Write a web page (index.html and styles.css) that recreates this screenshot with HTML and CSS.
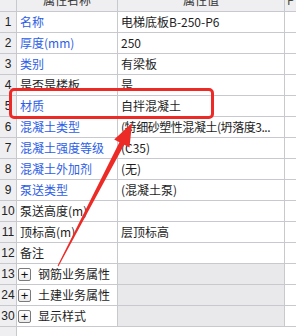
FILE: index.html
```html
<!DOCTYPE html>
<html>
<head>
<meta charset="utf-8">
<link rel="stylesheet" href="styles.css">
</head>
<body>
<div class="sheet">
  <div class="grid">
    <div class="cell num hdr"></div>
    <div class="cell hdr"><span class="htxt">属性名称</span></div>
    <div class="cell hdr"><span class="htxt">属性值</span></div>
    <div class="cell hdr last"><span class="htxt left">P</span></div>

    <div class="cell num">1</div><div class="cell name blue">名称</div><div class="cell val">电梯底板B-250-P6</div><div class="cell last"></div>
    <div class="cell num">2</div><div class="cell name blue">厚度(mm)</div><div class="cell val">250</div><div class="cell last"></div>
    <div class="cell num">3</div><div class="cell name blue">类别</div><div class="cell val">有梁板</div><div class="cell last"></div>
    <div class="cell num">4</div><div class="cell name">是否是楼板</div><div class="cell val">是</div><div class="cell last"></div>
    <div class="cell num">5</div><div class="cell name blue">材质</div><div class="cell val">自拌混凝土</div><div class="cell last"></div>
    <div class="cell num">6</div><div class="cell name blue">混凝土类型</div><div class="cell val tight">(特细砂塑性混凝土(坍落度3...</div><div class="cell last"></div>
    <div class="cell num">7</div><div class="cell name blue">混凝土强度等级</div><div class="cell val">(C35)</div><div class="cell last"></div>
    <div class="cell num">8</div><div class="cell name blue">混凝土外加剂</div><div class="cell val">(无)</div><div class="cell last"></div>
    <div class="cell num">9</div><div class="cell name blue">泵送类型</div><div class="cell val">(混凝土泵)</div><div class="cell last"></div>
    <div class="cell num">10</div><div class="cell name">泵送高度(m)</div><div class="cell val"></div><div class="cell last"></div>
    <div class="cell num">11</div><div class="cell name">顶标高(m)</div><div class="cell val">层顶标高</div><div class="cell last"></div>
    <div class="cell num">12</div><div class="cell name">备注</div><div class="cell val"></div><div class="cell last"></div>

    <div class="cell num">13</div><div class="cell name grp"><span class="plus">+</span>钢筋业务属性</div><div class="cell val gval"></div><div class="cell last"></div>
    <div class="cell num">24</div><div class="cell name grp"><span class="plus">+</span>土建业务属性</div><div class="cell val gval"></div><div class="cell last"></div>
    <div class="cell num">30</div><div class="cell name grp"><span class="plus">+</span>显示样式</div><div class="cell val gval"></div><div class="cell last"></div>

    <div class="cell num filler"></div>
  </div>

  <div class="highlight"></div>
  <svg class="arrow" width="296" height="336" viewBox="0 0 296 336">
    <polygon fill="#ec2a26" points="132,123 129.5,147.5 124.2,144.8 58.4,266.4 57.6,265.8 119.4,142.2 114.2,139.6"/>
  </svg>
</div>
</body>
</html>
```

FILE: styles.css
```css
html, body {
  margin: 0;
  padding: 0;
  background: #ffffff;
}

.sheet {
  position: relative;
  width: 296px;
  height: 336px;
  overflow: hidden;
  font-family: "Microsoft YaHei", "Noto Sans CJK SC", "Noto Sans", sans-serif;
  font-size: 12px;
  color: #1e1e1e;
}

.grid {
  display: grid;
  grid-template-columns: 17px 101px 167px 1fr;
  grid-template-rows: 12px;
  grid-auto-rows: 21px;
}

.cell {
  box-sizing: border-box;
  border-right: 1px solid #c8c8cf;
  border-bottom: 1px solid #c8c8cf;
  display: flex;
  align-items: center;
  white-space: nowrap;
  overflow: hidden;
  line-height: 20px;
}

.cell.last {
  border-right: none;
}

.hdr {
  background: #efeff1;
  align-items: flex-start;
  justify-content: center;
  color: #333;
}

.htxt {
  display: block;
  margin-top: -11px;
  line-height: 21px;
}

.htxt.left {
  margin-left: 0;
  color: #4a4a3a;
}

.hdr.last {
  justify-content: flex-start;
  padding-left: 2px;
}

.num {
  background: #efeff1;
  justify-content: center;
  font-family: "Liberation Sans", "Noto Sans", sans-serif;
  font-size: 12px;
  color: #222;
}

.name {
  padding-left: 3px;
}

.val {
  padding-left: 3px;
}

.tight {
  letter-spacing: -0.45px;
}

.blue {
  color: #2d5ee6;
}

.grp {
  padding-left: 1px;
  color: #1e1e1e;
}

.plus {
  box-sizing: border-box;
  width: 13px;
  height: 13px;
  border: 1px solid #7a7a7a;
  border-radius: 2px;
  background: linear-gradient(#ffffff, #ececec);
  display: flex;
  align-items: center;
  justify-content: center;
  font-family: "Liberation Sans", sans-serif;
  font-size: 13px;
  line-height: 11px;
  margin-right: 7px;
  color: #111;
}

.gval {
  background: #e9e9eb;
}

.filler {
  border-bottom: none;
  height: 10px;
}

.highlight {
  position: absolute;
  left: 9px;
  top: 88px;
  width: 205px;
  height: 31px;
  box-sizing: border-box;
  border: 3px solid #ec2a26;
  border-radius: 5px;
}

.arrow {
  position: absolute;
  left: 0;
  top: 0;
}
```
